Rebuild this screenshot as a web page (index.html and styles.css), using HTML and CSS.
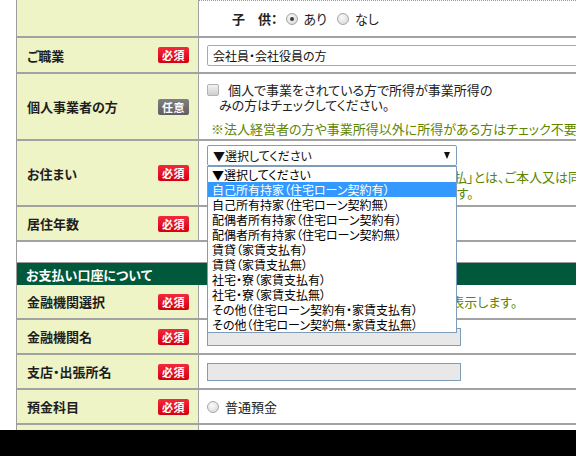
FILE: index.html
```html
<!DOCTYPE html>
<html lang="ja">
<head>
<meta charset="utf-8">
<link rel="stylesheet" href="styles.css">
</head>
<body>
<div class="page">
  <div class="form">
    <div class="row r1">
      <div class="label"></div>
      <div class="field dotted">
        <div class="kids">
          <span class="kids-label">子　供：</span>
          <span class="radio checked"></span><span class="opt">あり</span>
          <span class="radio"></span><span class="opt">なし</span>
        </div>
      </div>
    </div>
    <div class="row r2">
      <div class="label"><span>ご職業</span><span class="badge req">必須</span></div>
      <div class="field"><div class="select wide">会社員・会社役員の方</div></div>
    </div>
    <div class="row r3">
      <div class="label"><span>個人事業者の方</span><span class="badge opt-badge">任意</span></div>
      <div class="field top">
        <div class="check-line"><span class="checkbox"></span><span>個人で事業をされている方で所得が事業所得の</span></div>
        <div class="check-line2">みの方はチェックしてください。</div>
        <div class="note note-gap">※法人経営者の方や事業所得以外に所得がある方はチェック不要です。</div>
      </div>
    </div>
    <div class="row r4">
      <div class="label"><span>お住まい</span><span class="badge req">必須</span></div>
      <div class="field top">
        <div class="select-wrap">
          <div class="select focus"><span>▼選択してください</span><span class="arrow"></span></div>
          <div class="dropdown">
            <div class="option">▼選択してください</div>
            <div class="option selected">自己所有持家（住宅ローン契約有）</div>
            <div class="option">自己所有持家（住宅ローン契約無）</div>
            <div class="option">配偶者所有持家（住宅ローン契約有）</div>
            <div class="option">配偶者所有持家（住宅ローン契約無）</div>
            <div class="option">賃貸（家賃支払有）</div>
            <div class="option">賃貸（家賃支払無）</div>
            <div class="option">社宅・寮（家賃支払有）</div>
            <div class="option">社宅・寮（家賃支払無）</div>
            <div class="option">その他（住宅ローン契約有・家賃支払有）</div>
            <div class="option">その他（住宅ローン契約無・家賃支払無）</div>
          </div>
        </div>
        <div class="note note-block">※住居が「社宅・寮」「その他」での「家賃の支払」とは、ご本人又は同居のご家族が<br>家賃を毎月ご負担している場合を指しています。</div>
      </div>
    </div>
    <div class="row r5">
      <div class="label"><span>居住年数</span><span class="badge req">必須</span></div>
      <div class="field"></div>
    </div>

    <div class="section-head">お支払い口座について</div>
    <div class="row r6">
      <div class="label"><span>金融機関選択</span><span class="badge req">必須</span></div>
      <div class="field"><div class="note">金融機関をご選択すると、下記の欄に名称を表示します。</div></div>
    </div>
    <div class="row r6">
      <div class="label"><span>金融機関名</span><span class="badge req">必須</span></div>
      <div class="field"><div class="input"></div></div>
    </div>
    <div class="row r6">
      <div class="label"><span>支店・出張所名</span><span class="badge req">必須</span></div>
      <div class="field"><div class="input"></div></div>
    </div>
    <div class="row r6">
      <div class="label"><span>預金科目</span><span class="badge req">必須</span></div>
      <div class="field"><div class="radio-line"><span class="radio"></span><span class="opt">普通預金</span></div></div>
    </div>
    <div class="row r6">
      <div class="label"></div>
      <div class="field"></div>
    </div>
  </div>
</div>
<div class="taskbar"></div>
</body>
</html>
```

FILE: styles.css
```css
* { box-sizing: border-box; }
html, body { margin: 0; padding: 0; background: #fff; }
body {
  width: 576px;
  height: 456px;
  overflow: hidden;
  font-family: "Noto Sans CJK JP", "Noto Sans", sans-serif;
  font-size: 13px;
  color: #222;
  font-feature-settings: "palt";
}
.page { height: 430px; overflow: hidden; }
.taskbar { height: 26px; background: #000; }

.form {
  margin-left: 16px;
  width: 720px;
  border-left: 1px solid #9c9c9c;
}
.row {
  display: grid;
  grid-template-columns: 182px 1fr;
  border-bottom: 2px solid #a2a2a2;
}
.r1 { height: 38px; }
.r2 { height: 36px; }
.r3 { height: 67px; }
.r4 { height: 66px; }
.r5 { height: 35px; }
.r6 { height: 35px; }

.label {
  background: #eef4c6;
  border-right: 1px solid #a2a2a2;
  display: flex;
  align-items: center;
  justify-content: space-between;
  padding: 0 9px 0 10px;
  font-weight: bold;
  font-size: 13px;
  color: #1e1e1e;
}
.field {
  padding-left: 8px;
  display: flex;
  flex-direction: column;
  justify-content: center;
  align-items: flex-start;
}
.field.top { justify-content: flex-start; }
.dotted { border-top: 1px dotted #9a9a9a; }

.badge {
  display: inline-flex;
  align-items: center;
  justify-content: center;
  width: 31px;
  height: 16px;
  border-radius: 2px;
  color: #fff;
  font-size: 11px;
  font-weight: bold;
  letter-spacing: 0.5px;
}
.req { background: linear-gradient(#f2293d, #d4000f); }
.opt-badge { background: linear-gradient(#808080, #5e5e5e); }

.kids { display: flex; align-items: center; padding-left: 25px; }
.kids-label { font-weight: bold; margin-right: 8px; }
.opt { margin-right: 10px; }

.radio {
  width: 12px;
  height: 12px;
  border-radius: 50%;
  border: 1px solid #a6a6a6;
  background: radial-gradient(circle at 40% 35%, #fafafa, #d4d4d4);
  margin-right: 6px;
  display: inline-flex;
  align-items: center;
  justify-content: center;
}
.radio.checked::after {
  content: "";
  width: 4px;
  height: 4px;
  border-radius: 50%;
  background: #3a3a3a;
}

.select {
  height: 21px;
  border: 1px solid #a9a9a9;
  border-radius: 2px;
  background: #fff;
  font-size: 12px;
  padding: 0 6px 0 5px;
  display: flex;
  align-items: center;
  justify-content: space-between;
  color: #111;
}
.select.wide { width: 420px; }
.select.focus { width: 250px; border-color: #7f9db9; }
.arrow {
  width: 0;
  height: 0;
  border-left: 3.5px solid transparent;
  border-right: 3.5px solid transparent;
  border-top: 7px solid #111;
}

.check-line { display: flex; align-items: center; margin-top: 8px; line-height: 15px; }
.checkbox {
  width: 12px;
  height: 12px;
  border: 1px solid #b2b2b2;
  border-radius: 2px;
  background: linear-gradient(#f2f2f2, #cfcfcf);
  margin-right: 9px;
}
.check-line2 { padding-left: 12px; line-height: 15px; }

.note { color: #5e8500; line-height: 16px; white-space: nowrap; }
.note-gap { margin-top: 9px; padding-left: 4px; }
.note-block { padding-left: 4px; margin-top: 3px; }

.r4 .field { padding-top: 4px; }
.select-wrap { position: relative; }
.dropdown {
  position: absolute;
  top: 100%;
  left: 0;
  width: 250px;
  background: #fff;
  border: 1px solid #7f9db9;
  z-index: 10;
}
.option {
  height: 15px;
  line-height: 15px;
  font-size: 12px;
  padding-left: 4px;
  color: #000;
  white-space: nowrap;
}
.option.selected { background: #3399ff; color: #fff; }

.section-head {
  margin-top: 20px;
  height: 23px;
  border-top: 1px solid #9c9c9c;
  background: #02583b;
  color: #fff;
  font-weight: bold;
  font-size: 13px;
  padding-left: 9px;
  display: flex;
  align-items: center;
}

.input {
  width: 254px;
  height: 18px;
  background: #e8e8e8;
  border: 1px solid #7f9db9;
}
.radio-line { display: flex; align-items: center; }
```
